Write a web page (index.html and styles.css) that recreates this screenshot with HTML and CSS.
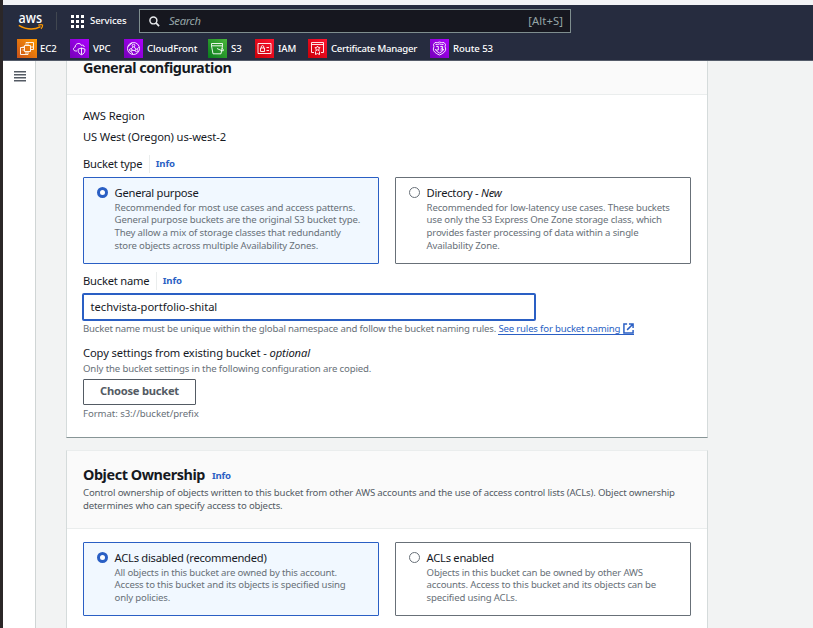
FILE: index.html
```html
<!DOCTYPE html>
<html lang="en">
<head>
<meta charset="utf-8">
<title>Create bucket</title>
<link rel="stylesheet" href="styles.css">
</head>
<body>
<div class="window">
  <header class="topbar">
    <div class="primary">
      <svg class="logo" viewBox="0 0 26 20" role="img" aria-label="aws">
        <text class="logo-text" x="0.6" y="10.800" textLength="23.5" lengthAdjust="spacingAndGlyphs">aws</text>
        <path d="M.8 13.400Q12.500 20 22.500 14.600" fill="none" stroke="#f90" stroke-width="1.500"/>
        <path d="M20.200 13.300Q23 12.200 24.600 13Q24.800 14.900 23 16.800" fill="none" stroke="#f90" stroke-width="1.200"/>
      </svg>
      <span class="divider"></span>
      <svg class="grid-icon" viewBox="0 0 13 13" fill="#fff"><path d="M0 0h3v3H0zM5 0h3v3H5zM10 0h3v3h-3zM0 5h3v3H0zM5 5h3v3H5zM10 5h3v3h-3zM0 10h3v3H0zM5 10h3v3H5zM10 10h3v3h-3z"/></svg>
      <span class="services">Services</span>
      <div class="search">
        <svg class="search-icon" viewBox="0 0 12 12" fill="none" stroke="#e8eaed"><circle cx="4.8" cy="4.8" r="3.8" stroke-width="1.6"/><path d="M7.6 7.6 11 11" stroke-width="1.9"/></svg>
        <span class="placeholder">Search</span>
        <span class="shortcut">[Alt+S]</span>
      </div>
    </div>
    <nav class="favorites">
      <a class="fav ec2"><svg viewBox="0 0 20 19"><path d="M7.500 6.500h6v6h-6zM9 6V4.300M11 6V4.300M9 13v2M7 8H5.500M7 11H5.500M14 8h2"/><path d="M9 4V3.500h7.500v7H14M7 8.500H3.500v7H11V13"/></svg><span>EC2</span></a>
      <a class="fav vpc"><svg viewBox="0 0 19 19"><path d="M7 12H5.800C3 12 2.700 8.700 5.200 8.100 5 4.200 10.400 3.200 11.300 6.400 13 5.600 14.200 6.500 14.200 8"/><path d="M8 10.200 11.500 9l3.500 1.200c0 3-1 4.700-3.500 5.500C9 14.900 8 13.200 8 10.200zM11.500 9v6.500"/></svg><span>VPC</span></a>
      <a class="fav cf"><svg viewBox="0 0 19 19"><circle cx="9.500" cy="9.500" r="6"/><circle cx="9.500" cy="6.500" r="1.300"/><circle cx="6.800" cy="11" r="1.300"/><circle cx="12.500" cy="11.500" r="1.300"/><path d="M9 7.800 7.300 9.800M10.200 7.800l1.700 2.500M4 7.500l4-3.500M8 11.300l3.300.2M7 12.300l2 3M13 10.200l2-2"/></svg><span>CloudFront</span></a>
      <a class="fav s3"><svg viewBox="0 0 19 19"><path d="M3.500 4.500h11v2.300h-11zM3.500 6.800 5 14.800h8l1.500-8M9 9.500l5 2.300q2 .3 1.300-1L13.900 9"/></svg><span>S3</span></a>
      <a class="fav iam"><svg viewBox="0 0 19 19"><path d="M3 4.500h13v10H3zM5.500 9h4v3.500h-4zM6.300 9V7.200q1.200-1.200 2.400 0V9M11.500 8.500H14M11.500 11.500H14"/></svg><span>IAM</span></a>
      <a class="fav acm"><svg viewBox="0 0 19 19"><path d="M6 13.500H3.500v-10h12v10H13M3.500 5.500h12M9.500 7l.8 1.500 1.700.2-1.200 1.200.3 1.700-1.600-.8-1.600.8.3-1.700L7 8.700l1.700-.2zM7.500 12.500v3l2-1 2 1v-3"/></svg><span>Certificate Manager</span></a>
      <a class="fav r53"><svg viewBox="0 0 19 19"><path d="M5 3.500q2 .8 4.500-.5 2.500 1.300 4.500.5l1.500 2q-1 2 .2 4.500 0 3.500-6.200 6-6.200-2.500-6.200-6Q4.500 7.500 3.500 5.500zM5.500 5.500q2 .5 4-.6 2 1.100 4 .6M5.300 10q.3 2.200 4.200 4 3.900-1.800 4.200-4"/><path d="M6.300 7.500h2v3.500h-2M10.300 7.500h2.300v3.500h-2.300M10.800 9.200h1.500"/></svg><span>Route 53</span></a>
    </nav>
  </header>
  <div class="body">
    <aside class="rail"><svg viewBox="0 0 12 11" stroke="#545b64" stroke-width="1.500"><path d="M0 .75h12M0 3.750h12M0 6.750h12M0 9.750h12"/></svg></aside>
    <main class="content">
      <section class="panel general">
        <div class="panel-head"><h2>General configuration</h2></div>
        <div class="panel-body">
          <p class="text region">AWS Region</p>
          <p class="text region-value">US West (Oregon) us-west-2</p>
          <div class="label"><span class="text">Bucket type</span><a class="info ruled">Info</a></div>
          <div class="tiles type-tiles">
            <div class="tile selected"><i class="radio"></i><div><p class="text">General purpose</p><p class="small">Recommended for most use cases and access patterns.<br>General purpose buckets are the original S3 bucket type.<br>They allow a mix of storage classes that redundantly<br>store objects across multiple Availability Zones.</p></div></div>
            <div class="tile"><i class="radio"></i><div><p class="text">Directory - <em>New</em></p><p class="small">Recommended for low-latency use cases. These buckets<br>use only the S3 Express One Zone storage class, which<br>provides faster processing of data within a single<br>Availability Zone.</p></div></div>
          </div>
          <div class="label name-label"><span class="text">Bucket name</span><a class="info ruled">Info</a></div>
          <div class="input text">techvista-portfolio-shital</div>
          <p class="small hint">Bucket name must be unique within the global namespace and follow the bucket naming rules. <a class="link">See rules for bucket naming <svg viewBox="0 0 12 12" fill="none" stroke="#2a5fc4" stroke-width="1.600"><path d="M4.500 1H1v10h10V7.500M6.500 1H11v4.500M11 1 4.500 7.500"/></svg></a></p>
          <p class="text copy">Copy settings from existing bucket - <em>optional</em></p>
          <p class="small copy-note">Only the bucket settings in the following configuration are copied.</p>
          <div class="button">Choose bucket</div>
          <p class="small format">Format: s3://bucket/prefix</p>
        </div>
      </section>
      <section class="panel ownership">
        <div class="panel-head"><h2><span>Object Ownership</span><a class="info">Info</a></h2>
          <p class="small desc">Control ownership of objects written to this bucket from other AWS accounts and the use of access control lists (ACLs). Object ownership<br>determines who can specify access to objects.</p></div>
        <div class="tiles acl-tiles">
          <div class="tile selected"><i class="radio"></i><div><p class="text">ACLs disabled (recommended)</p><p class="small">All objects in this bucket are owned by this account.<br>Access to this bucket and its objects is specified using<br>only policies.</p></div></div>
          <div class="tile"><i class="radio"></i><div><p class="text">ACLs enabled</p><p class="small">Objects in this bucket can be owned by other AWS<br>accounts. Access to this bucket and its objects can be<br>specified using ACLs.</p></div></div>
        </div>
      </section>
    </main>
  </div>
</div>
</body>
</html>
```
FILE: styles.css
```css
* { box-sizing: border-box; }
body { margin: 0; height: 628px; overflow: hidden; background: #f2f3f5; font-family: "Noto Sans", "Open Sans", sans-serif; color: #16191f; }
p, h2 { margin: 0; }
.window { height: 628px; padding-top: 5px; border-left: 3px solid #2b2728; display: flex; flex-direction: column; white-space: nowrap; }
.topbar { height: 56px; flex: none; background: #262c3f; border-bottom: 1px solid #545b69; color: #fff; }
.primary { height: 32px; display: flex; align-items: center; }
.logo { width: 26px; height: 20px; margin: 1px 0 0 15px; overflow: visible; }
.logo-text { font: 500 13.500px "Noto Sans", sans-serif; fill: #fff; }
.divider { width: 1px; height: 18px; background: #414750; margin-left: 12px; }
.grid-icon { width: 13px; height: 13px; margin-left: 14px; }
.services { font-size: 9.600px; font-weight: 500; margin: -1px 0 0 6px; width: 49px; letter-spacing: -.1px; line-height: 16px; }
.search { width: 432px; height: 24px; border: 1px solid #7f8e8f; background: #16171f; display: flex; align-items: center; padding: 0 7px 0 9px; }
.search-icon { width: 11px; height: 11px; }
.placeholder { margin: -1px 0 0 9px; font-size: 11.200px; font-style: italic; color: #95a5a6; letter-spacing: -.3px; }
.shortcut { margin: -1px 0 0 auto; font-size: 11.200px; color: #95a5a6; letter-spacing: .1px; }
.favorites { display: flex; height: 23px; padding: 0 0 0 14px; }
.fav { display: flex; align-items: center; height: 23px; font-size: 9.600px; font-weight: 500; letter-spacing: -.07px; }
.fav svg { width: 19px; height: 19px; margin-right: 4px; fill: none; stroke: #fff; stroke-width: .9; flex: none; }
.fav.ec2 svg { width: 20px; margin-right: 3px; background: linear-gradient(45deg, #c8511b, #f90); }
.fav.vpc svg, .fav.cf svg, .fav.r53 svg { background: linear-gradient(45deg, #7500b8, #ad00ff); }
.fav.s3 svg { background: linear-gradient(45deg, #087b1d, #4ab53a); }
.fav.iam svg, .fav.acm svg { background: linear-gradient(45deg, #c80008, #ff1430); }
.ec2 { width: 53px; }
.vpc { width: 54px; }
.cf { width: 84px; }
.s3 { width: 47px; }
.iam { width: 53px; }
.fav.acm { width: 122px; letter-spacing: -.27px; }
.body { display: flex; flex: 1; min-height: 0; background: #f2f3f3; }
.rail { width: 33px; background: #fff; border-right: 1px solid #d0d5d5; padding: 10px 0 0 11px; }
.rail svg { display: block; width: 12px; height: 11px; }
.content { width: 642px; margin-left: 30px; }
.panel { border: 1px solid #d5dbdb; border-top-color: #eaeded; background: #fff; }
.panel-head { background: #fafafa; border-bottom: 1px solid #eaeded; padding-left: 16px; }
.general { height: 377px; border-top: 0; border-bottom-color: #879596; }
.general .panel-head { height: 34px; }
h2 { font-size: 14.400px; line-height: 17.600px; font-weight: 700; letter-spacing: -.43px; display: flex; align-items: center; }
.general h2 { line-height: 14px; }
.panel-body { padding: 0 16px; }
.text { font-size: 11.200px; line-height: 17.600px; letter-spacing: -.12px; }
.small { font-size: 9.600px; line-height: 12.600px; color: #687078; letter-spacing: -.147px; }
.tile .small { letter-spacing: -.17px; }
.region { padding-top: 12px; }
.region-value { margin-top: 3px; }
.label { display: flex; align-items: center; height: 18px; margin-top: 10px; }
.label .text { letter-spacing: -.22px; }
.tile .text { letter-spacing: -.27px; line-height: 17px; }
.info { font-size: 9.600px; line-height: 18px; font-weight: 700; color: #2a5fc4; letter-spacing: -.2px; }
.info.ruled { border-left: 1px solid #eaeded; margin-left: 6.500px; padding-left: 6px; }
.tiles { display: grid; grid-template-columns: 296px 296px; gap: 16px; }
.type-tiles { height: 87px; margin-top: 4px; }
.tile { border: 1px solid #687078; border-radius: 1px; display: flex; padding: 6px 0 0 13px; }
.tile .small { margin-top: .6px; }
.tile.selected { border-color: #2a5fc4; background: #f1f8ff; }
.radio { width: 11px; height: 11px; border: 1px solid #687078; border-radius: 50%; background: #fff; margin: 3px 6.600px 0 0; flex: none; }
.selected .radio { border: 3.500px solid #2a5fc4; }
.label.name-label { margin-top: 8px; }
.input { width: 454px; height: 28px; border: 2px solid #2a5fc4; border-radius: 2px; margin: 3px 0 0 -1px; padding-left: 6.600px; line-height: 24px; letter-spacing: -.05px; }
.hint { margin-top: 2px; letter-spacing: -.172px; }
.link { color: #2a5fc4; border-bottom: 1px solid #2a5fc4; display: inline-block; line-height: 11px; }
.link svg { width: 11px; height: 11px; vertical-align: -2px; }
.copy { margin-top: 8px; }
.copy-note { margin-top: 1.500px; letter-spacing: -.13px; }
.button { width: 113px; height: 26px; border: 1px solid #545b64; border-radius: 1px; margin-top: 3.500px; text-align: center; line-height: 22px; font-size: 11.200px; font-weight: 700; color: #545b64; letter-spacing: -.25px; }
.format { margin-top: 2.600px; letter-spacing: -.06px; }
.ownership { height: 200px; margin-top: 12px; }
.ownership .panel-head { height: 78px; padding-top: 13px; }
.ownership h2 .info { margin: 3px 0 0 7px; }
.desc { margin-top: 2px; color: #545b64; }
.acl-tiles { height: 74px; margin: 13px 16px 0; }
```
